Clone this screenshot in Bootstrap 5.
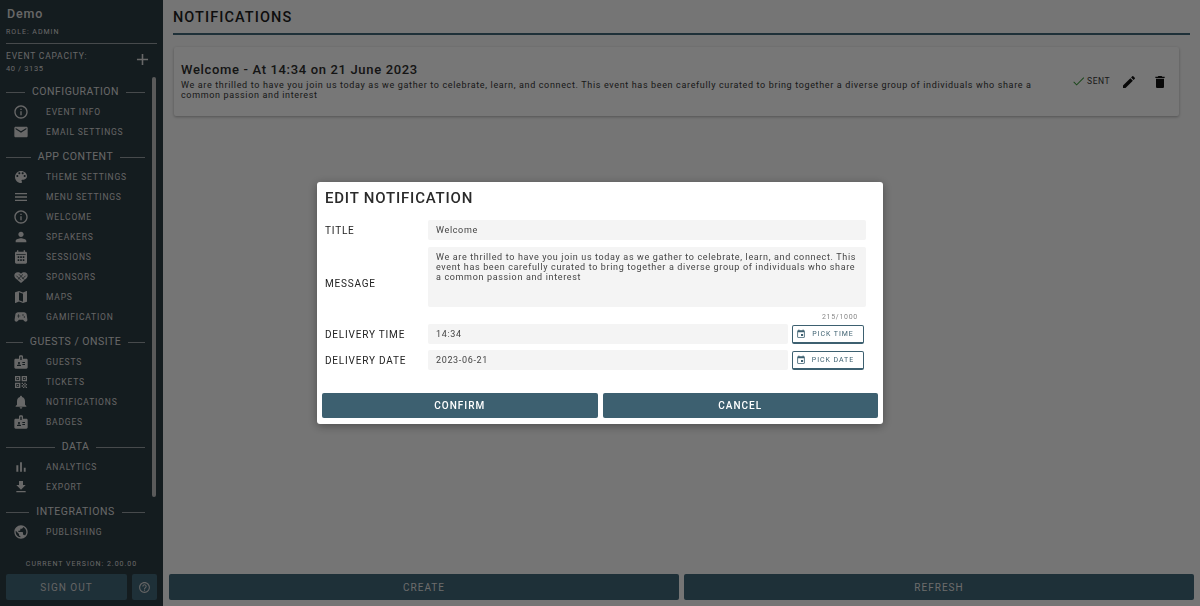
<!DOCTYPE html>
<html lang="en"><head><meta charset="utf-8"><title>Notifications</title>
<link href="https://cdn.jsdelivr.net/npm/bootstrap@5.3.0/dist/css/bootstrap.min.css" rel="stylesheet">
<style>
html,body{height:606px;overflow:hidden}
body{font-family:Roboto,"Liberation Sans",sans-serif;background:#ebebeb;color:#222;letter-spacing:.08em}
.shell{height:606px}
.side{width:163px;flex:none;background:#29383f;color:#d0d0d0;padding:0 6px}
.brand{font-size:12.5px;font-weight:500;line-height:14px;padding-top:7px;letter-spacing:.07em;padding-left:1px}
.role{font-size:7px;line-height:10px;margin-top:6px;padding-bottom:6px;border-bottom:1px solid #8e9598;letter-spacing:1px}
.capac{height:33px;padding:6px 0 0 0;font-size:8.5px;line-height:13px;letter-spacing:.8px}
.capac small{display:block;font-size:7.5px;line-height:12px;letter-spacing:.6px}
.capac svg{width:19px;height:19px;fill:#d0d0d0;margin:0 5px 0 0}
.scrollarea{position:relative;height:420px}
.thumb{position:absolute;right:1px;top:0;width:4px;height:420px;background:#b5b5b5;border-radius:2px}
.head{display:flex;align-items:center;font-size:10.5px;height:20px;margin-top:5px;width:139px;gap:7px;letter-spacing:.5px;white-space:nowrap}
.head:first-child{margin-top:0}
.head::before,.head::after{content:"";flex:1;height:1px;background:#8e9598}
.item{display:flex;align-items:center;height:20px;font-size:8.5px;color:#c9c9c9;letter-spacing:.8px}
.item svg{width:16px;height:16px;fill:#d0d0d0;margin-left:7px;flex:none}
.item span{margin-left:17px}
.version{font-size:7px;text-align:center;line-height:10px;letter-spacing:.14em}
.signrow{margin-top:5px;gap:5px;padding-bottom:6px}
.btn-dark-teal{background:#3d6070;color:#fff;border:0;border-radius:2px;font-size:10px;letter-spacing:.1em;display:flex;align-items:center;justify-content:center}
.signrow .btn-dark-teal{height:26px;color:#c8c8c8}
.signout{width:121px}
.helpb{width:25px}
.helpb svg{width:13px;height:13px;fill:#c8c8c8}
.mainarea{min-width:0}
.pagehead{margin:0 10px;height:35px;border-bottom:2px solid #3d6070;font-size:14.5px;font-weight:500;line-height:35px;letter-spacing:.075em;color:#1c1c1c}
.notecard{margin:12px 21px 0 11px;height:69px;background:#eeeeee;border-radius:2px;box-shadow:0 1px 3px rgba(0,0,0,.3);padding:0 11px 0 7px}
.notetitle{font-size:13px;font-weight:500;line-height:15px;letter-spacing:.66px;margin-bottom:3px;margin-top:-2px;color:#2a2a2a}
.notetext{font-size:9px;line-height:10px;color:#333;letter-spacing:.65px;width:865px}
.sent{font-size:8.5px;color:#333;letter-spacing:.5px;margin-right:11px}
.sent span{margin-left:1px}
.acts svg{fill:#111}
.sent svg{width:15px;height:15px;fill:#2e8b2e}
.edit-ic{margin-right:15px}
.footbar{padding:0 6px 6px;gap:5px}
.footbar .btn-dark-teal{height:26px;flex:1;color:#d8d8d8}
.veil{position:fixed;inset:0;background:rgba(0,0,0,.5);display:flex;align-items:center;justify-content:center}
.dialog{width:566px;height:242px;background:#fff;border-radius:3px;box-shadow:0 2px 10px rgba(0,0,0,.35);padding:0 5px;color:#222}
.dtitle{font-size:15px;font-weight:500;padding:0 3px;letter-spacing:.8px;height:38px;line-height:33px;color:#2a2a2a}
.frow{display:flex;align-items:center;padding:0 12px 0 3px}
.flabel{width:103px;flex:none;font-size:10px;letter-spacing:.8px;color:#222}
.fmsg-row .flabel{margin-top:20px}
.fbox{background:#f4f4f4;border-radius:2px;height:20px;font-size:9px;line-height:20px;padding:0 8px;color:#444;letter-spacing:.65px}
.fmsg{height:60px;width:438px;line-height:10px;padding-top:5px;margin-top:7px;flex:none}
.counter{font-size:7px;text-align:right;color:#888;height:17px;line-height:20px;padding-right:20px;letter-spacing:.7px}
.pick{width:72px;height:19px;margin:0 2px 0 4px;border:1px solid #3d6070;border-bottom-width:2px;border-radius:2px;background:#fff;font-size:7px;color:#3d6070;display:flex;align-items:center;padding:0 3px;flex:none;letter-spacing:.95px}
.pick svg{width:10px;height:10px;fill:#3d6070;flex:none}
.pick span{flex:1;text-align:center;padding-top:1px}
.gaprow{margin-top:6px}
.dbtns{gap:5px;margin-top:23px}
.dbtns .btn-dark-teal{flex:1;height:25px;font-size:10px;font-weight:500;padding-top:1px}
</style></head>
<body>
<svg width="0" height="0" class="d-none"><defs>
<symbol id="i-info" viewBox="0 0 24 24"><path d="M11 7h2v2h-2zm0 4h2v6h-2zm1-9C6.48 2 2 6.48 2 12s4.48 10 10 10 10-4.48 10-10S17.52 2 12 2zm0 18c-4.41 0-8-3.59-8-8s3.59-8 8-8 8 3.59 8 8-3.59 8-8 8z"/></symbol>
<symbol id="i-mail" viewBox="0 0 24 24"><path d="M20 4H4c-1.1 0-1.99.9-1.99 2L2 18c0 1.1.9 2 2 2h16c1.1 0 2-.9 2-2V6c0-1.1-.9-2-2-2zm0 4l-8 5-8-5V6l8 5 8-5v2z"/></symbol>
<symbol id="i-pal" viewBox="0 0 24 24"><path d="M12 3c-4.97 0-9 4.03-9 9s4.03 9 9 9c.83 0 1.5-.67 1.5-1.5 0-.39-.15-.74-.39-1.01-.23-.26-.38-.61-.38-.99 0-.83.67-1.5 1.5-1.5H16c2.76 0 5-2.24 5-5 0-4.42-4.03-8-9-8zm-5.5 9c-.83 0-1.5-.67-1.5-1.5S5.67 9 6.5 9 8 9.67 8 10.5 7.33 12 6.5 12zm3-4C8.67 8 8 7.33 8 6.5S8.67 5 9.5 5s1.5.67 1.5 1.5S10.33 8 9.5 8zm5 0c-.83 0-1.5-.67-1.5-1.5S13.67 5 14.5 5s1.5.67 1.5 1.5S15.33 8 14.5 8zm3 4c-.83 0-1.5-.67-1.5-1.5S16.67 9 17.5 9s1.5.67 1.5 1.5-.67 1.5-1.5 1.5z"/></symbol>
<symbol id="i-menu" viewBox="0 0 24 24"><path d="M3 18h18v-2H3v2zm0-5h18v-2H3v2zm0-7v2h18V6H3z"/></symbol>
<symbol id="i-person" viewBox="0 0 24 24"><path d="M12 12c2.21 0 4-1.79 4-4s-1.79-4-4-4-4 1.79-4 4 1.79 4 4 4zm0 2c-2.67 0-8 1.34-8 4v2h16v-2c0-2.66-5.33-4-8-4z"/></symbol>
<symbol id="i-cal" viewBox="0 0 24 24"><path fill-rule="evenodd" d="M19 4h-1V2h-2v2H8V2H6v2H5c-1.1 0-2 .9-2 2v14c0 1.1.9 2 2 2h14c1.1 0 2-.9 2-2V6c0-1.1-.9-2-2-2zM5 8h14v1H5zM7 11h2.4v2.4H7zm3.8 0h2.4v2.4h-2.4zm3.8 0H17v2.4h-2.4zM7 15.5h2.4v2.4H7zm3.8 0h2.4v2.4h-2.4zm3.8 0H17v2.4h-2.4z"/></symbol>
<symbol id="i-spon" viewBox="0 0 24 24"><path d="M7 5c2 0 3.5.6 5 2 1.5-1.4 3-2 5-2 3 0 5 2.3 5 5 0 1.5-.7 2.7-1.7 3.7L12 21l-8.3-7.3C2.7 12.7 2 11.5 2 10c0-2.7 2-5 5-5z"/><path d="M5 10l7 7M9 8l8 8M15 8l-8 8M19 10l-5 5" stroke="#29383f" stroke-width="1.2" fill="none"/></symbol>
<symbol id="i-map" viewBox="0 0 24 24"><path d="M20.5 3l-.16.03L15 5.1 9 3 3.36 4.9c-.21.07-.36.25-.36.48V20.5c0 .28.22.5.5.5l.16-.03L9 18.9l6 2.1 5.64-1.9c.21-.07.36-.25.36-.48V3.5c0-.28-.22-.5-.5-.5zM15 19l-6-2.11V5l6 2.11V19z"/></symbol>
<symbol id="i-game" viewBox="0 0 24 24"><path d="M21.58 16.09l-1.09-7.66C20.21 6.46 18.52 5 16.53 5H7.47C5.48 5 3.79 6.46 3.51 8.43l-1.09 7.66C2.2 17.63 3.39 19 4.94 19c.68 0 1.32-.27 1.8-.75L9 16h6l2.25 2.25c.48.48 1.13.75 1.8.75 1.56 0 2.75-1.37 2.53-2.91zM11 11H9v2H8v-2H6v-1h2V8h1v2h2v1zm4-1c-.55 0-1-.45-1-1s.45-1 1-1 1 .45 1 1-.45 1-1 1zm2 3c-.55 0-1-.45-1-1s.45-1 1-1 1 .45 1 1-.45 1-1 1z"/></symbol>
<symbol id="i-badge" viewBox="0 0 24 24"><path d="M20 7h-5V4c0-1.1-.9-2-2-2h-2c-1.1 0-2 .9-2 2v3H4c-1.1 0-2 .9-2 2v11c0 1.1.9 2 2 2h16c1.1 0 2-.9 2-2V9c0-1.1-.9-2-2-2zM9 12c.83 0 1.5.67 1.5 1.5S9.83 15 9 15s-1.5-.67-1.5-1.5S8.17 12 9 12zm3 6H6v-.75c0-1 2-1.5 3-1.5s3 .5 3 1.5V18zm1-9h-2V4h2v5zm5 7.5h-4V15h4v1.5zm0-3h-4V12h4v1.5z"/></symbol>
<symbol id="i-qr" viewBox="0 0 24 24"><path d="M3 11h8V3H3v8zm2-6h4v4H5V5zM3 21h8v-8H3v8zm2-6h4v4H5v-4zM13 3v8h8V3h-8zm6 6h-4V5h4v4zM6 6h2v2H6zM6 16h2v2H6zM16 6h2v2h-2zM19 19h2v2h-2zM13 13h2v2h-2zM15 15h2v2h-2zM13 17h2v2h-2zM15 19h2v2h-2zM17 17h2v2h-2zM17 13h2v2h-2zM19 15h2v2h-2z"/></symbol>
<symbol id="i-bell" viewBox="0 0 24 24"><path d="M12 22c1.1 0 2-.9 2-2h-4c0 1.1.89 2 2 2zm6-6v-5c0-3.07-1.64-5.64-4.5-6.32V4c0-.83-.67-1.5-1.5-1.5s-1.5.67-1.5 1.5v.68C7.63 5.36 6 7.92 6 11v5l-2 2v1h16v-1l-2-2z"/></symbol>
<symbol id="i-bar" viewBox="0 0 24 24"><path d="M5 9.2h3V19H5zM10.6 5h2.8v14h-2.8zm5.6 8H19v6h-2.8z"/></symbol>
<symbol id="i-down" viewBox="0 0 24 24"><path d="M19 9h-4V3H9v6H5l7 7 7-7zM5 18v2h14v-2H5z"/></symbol>
<symbol id="i-pub" viewBox="0 0 24 24"><path d="M12 2C6.48 2 2 6.48 2 12s4.48 10 10 10 10-4.48 10-10S17.52 2 12 2zm-1 17.93c-3.95-.49-7-3.85-7-7.93 0-.62.08-1.21.21-1.79L9 15v1c0 1.1.9 2 2 2v1.93zm6.9-2.54c-.26-.81-1-1.39-1.9-1.39h-1v-3c0-.55-.45-1-1-1H8v-2h2c.55 0 1-.45 1-1V7h2c1.1 0 2-.9 2-2v-.41c2.93 1.19 5 4.06 5 7.41 0 2.08-.8 3.97-2.1 5.39z"/></symbol>
<symbol id="i-event" viewBox="0 0 24 24"><path d="M17 12h-5v5h5v-5zM16 1v2H8V1H6v2H5c-1.11 0-1.99.9-1.99 2L3 19c0 1.1.89 2 2 2h14c1.1 0 2-.9 2-2V5c0-1.1-.9-2-2-2h-1V1h-2zm3 18H5V8h14v11z"/></symbol>
</defs></svg>
<div class="shell d-flex">
<aside class="side d-flex flex-column">
  <div class="brand">Demo</div>
  <div class="role">ROLE: ADMIN</div>
  <div class="capac d-flex justify-content-between"><div>EVENT CAPACITY:<small>40 / 3135</small></div><svg viewBox="0 0 24 24"><path d="M19 13h-6v6h-2v-6H5v-2h6V5h2v6h6v2z"/></svg></div>
  <div class="scrollarea">
    <div class="thumb"></div>
    <div class="head">CONFIGURATION</div>
    <div class="item"><svg><use href="#i-info"/></svg><span>EVENT INFO</span></div>
    <div class="item"><svg><use href="#i-mail"/></svg><span>EMAIL SETTINGS</span></div>
    <div class="head">APP CONTENT</div>
    <div class="item"><svg><use href="#i-pal"/></svg><span>THEME SETTINGS</span></div>
    <div class="item"><svg><use href="#i-menu"/></svg><span>MENU SETTINGS</span></div>
    <div class="item"><svg><use href="#i-info"/></svg><span>WELCOME</span></div>
    <div class="item"><svg><use href="#i-person"/></svg><span>SPEAKERS</span></div>
    <div class="item"><svg><use href="#i-cal"/></svg><span>SESSIONS</span></div>
    <div class="item"><svg><use href="#i-spon"/></svg><span>SPONSORS</span></div>
    <div class="item"><svg><use href="#i-map"/></svg><span>MAPS</span></div>
    <div class="item"><svg><use href="#i-game"/></svg><span>GAMIFICATION</span></div>
    <div class="head">GUESTS / ONSITE</div>
    <div class="item"><svg><use href="#i-badge"/></svg><span>GUESTS</span></div>
    <div class="item"><svg><use href="#i-qr"/></svg><span>TICKETS</span></div>
    <div class="item"><svg><use href="#i-bell"/></svg><span>NOTIFICATIONS</span></div>
    <div class="item"><svg><use href="#i-badge"/></svg><span>BADGES</span></div>
    <div class="head">DATA</div>
    <div class="item"><svg><use href="#i-bar"/></svg><span>ANALYTICS</span></div>
    <div class="item"><svg><use href="#i-down"/></svg><span>EXPORT</span></div>
    <div class="head">INTEGRATIONS</div>
    <div class="item"><svg><use href="#i-pub"/></svg><span>PUBLISHING</span></div>
  </div>
  <div class="version mt-auto">CURRENT VERSION: 2.00.00</div>
  <div class="signrow d-flex"><button class="btn-dark-teal signout">SIGN OUT</button><button class="btn-dark-teal helpb"><svg viewBox="0 0 24 24"><path d="M11 18h2v-2h-2v2zm1-16C6.48 2 2 6.48 2 12s4.48 10 10 10 10-4.48 10-10S17.52 2 12 2zm0 18c-4.41 0-8-3.59-8-8s3.59-8 8-8 8 3.59 8 8-3.59 8-8 8zm0-14c-2.21 0-4 1.79-4 4h2c0-1.1.9-2 2-2s2 .9 2 2c0 2-3 1.75-3 5h2c0-2.25 3-2.5 3-5 0-2.21-1.79-4-4-4z"/></svg></button></div>
</aside>
<main class="mainarea flex-grow-1 d-flex flex-column">
  <div class="pagehead">NOTIFICATIONS</div>
  <div class="notecard d-flex align-items-center justify-content-between">
    <div><div class="notetitle">Welcome - At 14:34 on 21 June 2023</div><div class="notetext">We are thrilled to have you join us today as we gather to celebrate, learn, and connect. This event has been carefully curated to bring together a diverse group of individuals who share a common passion and interest</div></div>
    <div class="acts d-flex align-items-center">
      <div class="sent d-flex align-items-center"><svg viewBox="0 0 24 24"><path d="M9 16.2L4.8 12l-1 1L9 18.2 21 6.2l-1-1z"/></svg><span>SENT</span></div>
      <svg width="16" height="16" viewBox="0 0 24 24" class="edit-ic"><path d="M3 17.25V21h3.75L17.81 9.94l-3.75-3.75L3 17.25zM20.71 7.04c.39-.39.39-1.02 0-1.41l-2.34-2.34c-.39-.39-1.02-.39-1.41 0l-1.83 1.83 3.75 3.75 1.83-1.83z"/></svg>
      <svg width="16" height="16" viewBox="0 0 24 24"><path d="M6 19c0 1.1.9 2 2 2h8c1.1 0 2-.9 2-2V7H6v12zM19 4h-3.5l-1-1h-5l-1 1H5v2h14V4z"/></svg>
    </div>
  </div>
  <div class="footbar d-flex mt-auto"><button class="btn-dark-teal">CREATE</button><button class="btn-dark-teal">REFRESH</button></div>
</main>
</div>
<div class="veil">
  <div class="dialog">
    <div class="dtitle">EDIT NOTIFICATION</div>
    <div class="frow"><div class="flabel">TITLE</div><div class="fbox flex-grow-1">Welcome</div></div>
    <div class="frow fmsg-row"><div class="flabel">MESSAGE</div><div class="fbox fmsg">We are thrilled to have you join us today as we gather to celebrate, learn, and connect. This event has been carefully curated to bring together a diverse group of individuals who share a common passion and interest</div></div>
    <div class="counter">215/1000</div>
    <div class="frow"><div class="flabel">DELIVERY TIME</div><div class="fbox flex-grow-1">14:34</div><div class="pick"><svg viewBox="0 0 24 24"><use href="#i-event"/></svg><span>PICK TIME</span></div></div>
    <div class="frow gaprow"><div class="flabel">DELIVERY DATE</div><div class="fbox flex-grow-1">2023-06-21</div><div class="pick"><svg viewBox="0 0 24 24"><use href="#i-event"/></svg><span>PICK DATE</span></div></div>
    <div class="dbtns d-flex"><button class="btn-dark-teal">CONFIRM</button><button class="btn-dark-teal">CANCEL</button></div>
  </div>
</div>
<script src="https://cdn.jsdelivr.net/npm/bootstrap@5.3.0/dist/js/bootstrap.bundle.min.js"></script>
</body></html>
